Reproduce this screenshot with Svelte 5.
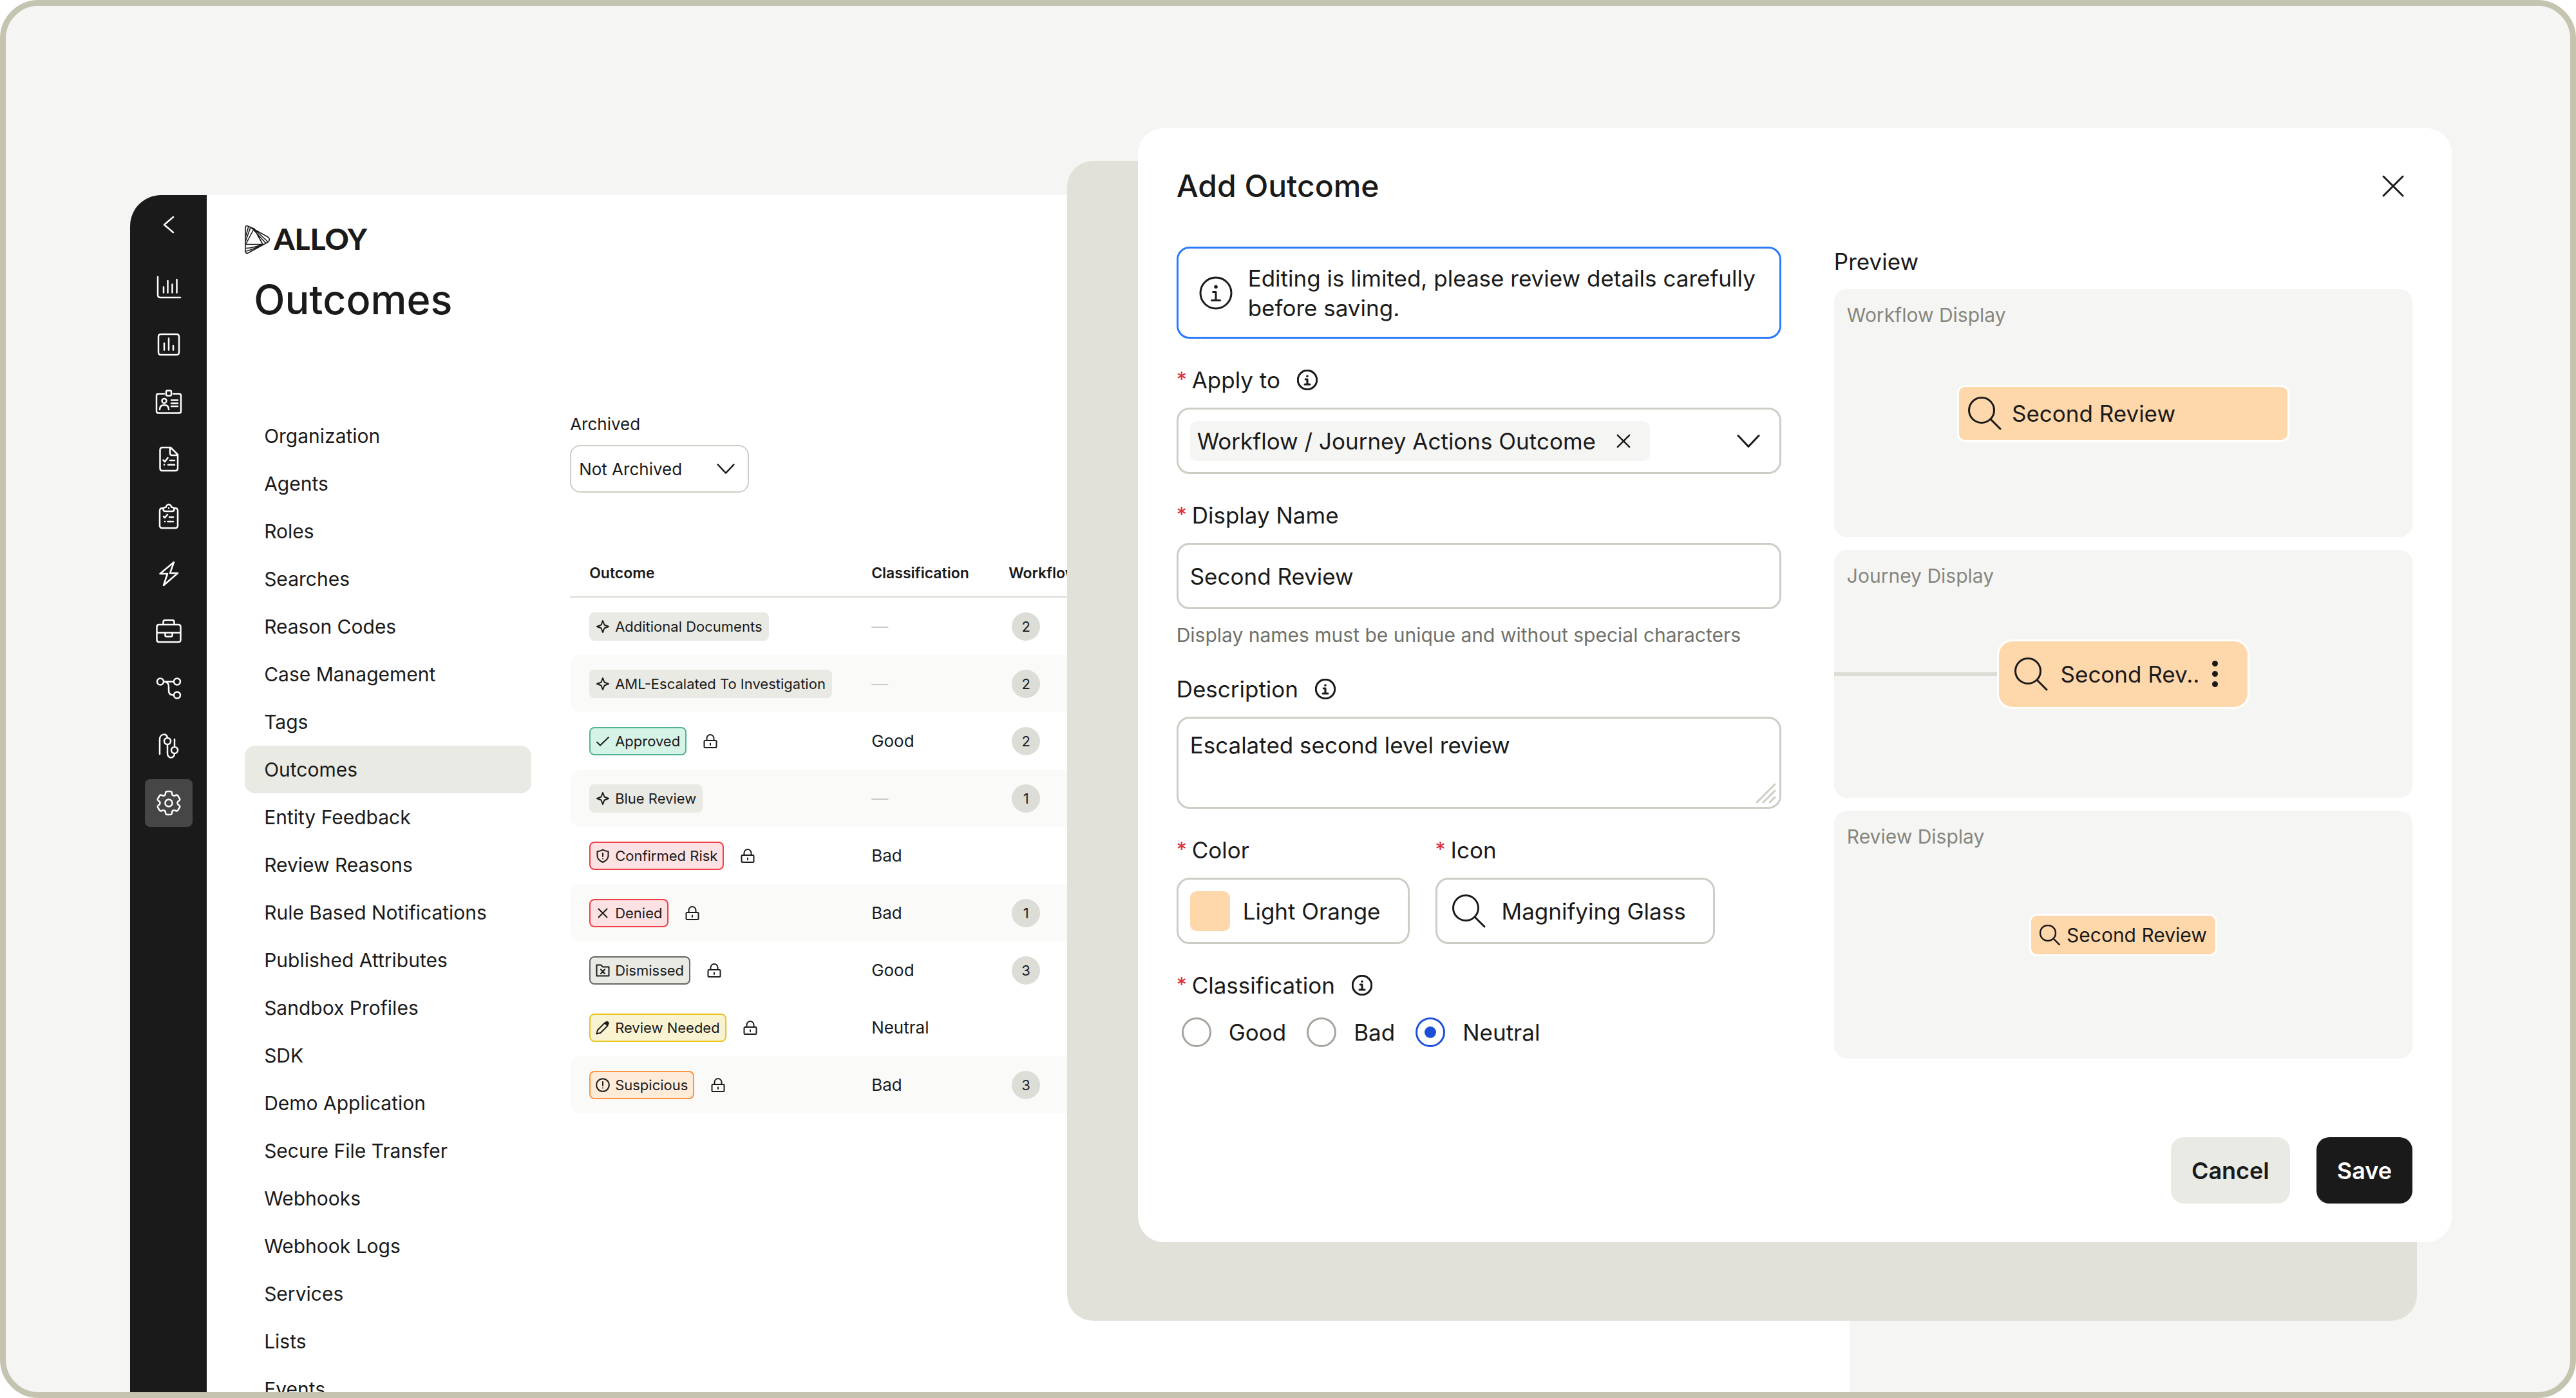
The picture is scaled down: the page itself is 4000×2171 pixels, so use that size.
<script lang="ts">
  const ring = (cx: number, cy: number, r: number) =>
    `M${cx - r} ${cy}a${r} ${r} 0 1 0 ${2 * r} 0a${r} ${r} 0 1 0 ${-2 * r} 0`;

  type Icon = { box: number; line: string; solid?: string };

  const icons: Record<string, Icon> = {
    back: { box: 48, line: 'M31 12L17 24l14 12' },
    chart: { box: 48, line: 'M7 8v28q0 4 4 4h31M16 32.5v-9M22.5 32.5V14M29.5 32.5v-13M36.5 32.5V12' },
    report: {
      box: 48,
      line: 'M12 8h24q4 0 4 4v24q0 4-4 4H12q-4 0-4-4V12q0-4 4-4ZM17 32.5V22M24 32.5V14.5M31 32.5V26'
    },
    badge: {
      box: 48,
      line:
        'M17 11.5H8q-3 0-3 3v24q0 3 3 3h32q3 0 3-3v-24q0-3-3-3h-9M22 6.5h4q2 0 2 2v4q0 2-2 2h-4q-2 0-2-2v-4q0-2 2-2Z' +
        'M10 36q0-7 7-7t7 7M28 21.5h10M28 26.3h10M28 31h10' +
        ring(17, 22.5, 3.5)
    },
    document: {
      box: 48,
      line:
        'M14 6h13l11 11v21q0 4-4 4H14q-3.5 0-3.5-4V10q0-4 3.5-4ZM26 6v9q0 3 3 3h9' +
        'M15.5 25.5l2.5 2.5 4.5-6M26 26h7M17 32.7h.1M23 32.7h10'
    },
    clipboard: {
      box: 48,
      line:
        'M15 11q-5 0-5 4v23q0 4 4 4h20q4 0 4-4V15q0-4-5-4M19 16h10q3.5 0 3.5-3T28 9.5a4 4 0 0 0-8 0q-4.5.5-4.5 3.5T19 16ZM24 11h.1' +
        'M16 24l2 2 4-5M25 25h6M18 32h.1M22.5 32H31'
    },
    bolt: { box: 48, line: 'M32 6L26 23h12L16 42l6-18H10.5Z' },
    briefcase: {
      box: 48,
      line:
        'M9 14h30q3.5 0 3.5 3.5v20q0 3.5-3.5 3.5H9q-3.5 0-3.5-3.5v-20Q5.5 14 9 14ZM15.5 14v-4q0-3 3-3h11q3 0 3 3v4' +
        'M5.5 26.5h37M18.5 26.5v4q0 2 2 2h7q2 0 2-2v-4'
    },
    flow: {
      box: 48,
      line: 'M16 13.5h16M16 13.5q8 0 8 8v6q0 7 8 7' + ring(11, 13.5, 5) + ring(37, 13.5, 5) + ring(37, 34.5, 5)
    },
    route: {
      box: 48,
      line: 'M10 37V14c0-9 12-10 12-2M22 22v14c0 8.5 11 8.5 11 0M33 26V14' + ring(22, 17, 5) + ring(33, 31, 5)
    },
    cog: {
      box: 24,
      line:
        'M9.594 3.94c.09-.542.56-.94 1.11-.94h2.593c.55 0 1.02.398 1.11.94l.213 1.281c.063.374.313.686.645.87.074.04.147.083.22.127.325.196.72.257 1.075.124l1.217-.456a1.125 1.125 0 0 1 1.37.49l1.296 2.247a1.125 1.125 0 0 1-.26 1.431l-1.003.827c-.293.241-.438.613-.43.992a7.723 7.723 0 0 1 0 .255c-.008.378.137.75.43.991l1.004.827c.424.35.534.955.26 1.43l-1.298 2.247a1.125 1.125 0 0 1-1.369.491l-1.217-.456c-.355-.133-.75-.072-1.076.124a6.47 6.47 0 0 1-.22.128c-.331.183-.581.495-.644.869l-.213 1.281c-.09.543-.56.94-1.11.94h-2.594c-.55 0-1.019-.398-1.11-.94l-.213-1.281c-.062-.374-.312-.686-.644-.87a6.52 6.52 0 0 1-.22-.127c-.325-.196-.72-.257-1.076-.124l-1.217.456a1.125 1.125 0 0 1-1.369-.49l-1.297-2.247a1.125 1.125 0 0 1 .26-1.431l1.004-.827c.292-.24.437-.613.43-.991a6.932 6.932 0 0 1 0-.255c.007-.38-.138-.751-.43-.992l-1.004-.827a1.125 1.125 0 0 1-.26-1.43l1.297-2.247a1.125 1.125 0 0 1 1.37-.491l1.216.456c.356.133.751.072 1.076-.124.072-.044.146-.086.22-.128.332-.183.582-.495.644-.869l.214-1.28Z' +
        ring(12, 12, 2.8)
    },
    sparkle: { box: 22, line: 'M11 2l2.5 6.5L20 11l-6.5 2.5L11 20l-2.5-6.5L2 11l6.5-2.5Z' },
    check: { box: 22, line: 'M2 12.5l5 5L20 5' },
    shield: { box: 22, line: 'M11 1.5c3 2 5 2.5 8.500 2.8V11c0 5-4 8-8.500 10-4.500-2-8.500-5-8.500-10V4.300C6 4 8 3.500 11 1.500ZM11 7v5M11 15.500v.1' },
    cross: { box: 22, line: 'M4.5 4.5l13 13M17.5 4.5l-13 13' },
    folder: { box: 22, line: 'M1.5 2.5H8L11 5.5h9.5v14h-19ZM8 9.5l6 6.5M14 9.5L8 16' },
    pencil: {
      box: 22,
      line: 'M1.5 20.5l1.5-6L14 3.5l4.5 4.5L7.5 19Z',
      solid: 'M14 3.5l1.5-1.5c1-1 3-1 4 0s1 3 0 4L18.5 8Z'
    },
    alert: { box: 22, line: ring(11, 11, 9.8) + 'M11 6v6M11 15.5v.1' },
    lock: {
      box: 22,
      line: 'M3 10h16q1.5 0 1.5 1.5v8q0 1.5-1.5 1.5H3q-1.5 0-1.5-1.5v-8Q1.5 10 3 10ZM5.5 10V6.5a5.5 5.5 0 0 1 11 0V10M11 14.5v2.5'
    },
    search: { box: 52, line: ring(21, 21, 19.5) + 'M35 35l15 15' },
    info: { box: 52, line: ring(26, 26, 24) + 'M21.5 24.5H26V37.5M19.5 37.5h13', solid: ring(26, 16.5, 2.4) },
    down: { box: 36, line: 'M2 9.5l16 17 16-17' },
    close: { box: 36, line: 'M3 3l30 30M33 3L3 33' },
    grip: { box: 32, line: 'M2 30L30 2M12 30L30 12M22 30l8-8' }
  };

  const tools = [
    { label: 'Dashboard', icon: 'chart' },
    { label: 'Reports', icon: 'report' },
    { label: 'Entities', icon: 'badge' },
    { label: 'Evaluations', icon: 'document' },
    { label: 'Reviews', icon: 'clipboard' },
    { label: 'Actions', icon: 'bolt' },
    { label: 'Cases', icon: 'briefcase' },
    { label: 'Workflows', icon: 'flow' },
    { label: 'Journeys', icon: 'route' },
    { label: 'Settings', icon: 'cog' }
  ];

  const sections = [
    'Organization',
    'Agents',
    'Roles',
    'Searches',
    'Reason Codes',
    'Case Management',
    'Tags',
    'Outcomes',
    'Entity Feedback',
    'Review Reasons',
    'Rule Based Notifications',
    'Published Attributes',
    'Sandbox Profiles',
    'SDK',
    'Demo Application',
    'Secure File Transfer',
    'Webhooks',
    'Webhook Logs',
    'Services',
    'Lists',
    'Events'
  ];

  const outcomes = [
    { name: 'Additional Documents', icon: 'sparkle', tone: 'plain', count: 2 },
    { name: 'AML-Escalated To Investigation', icon: 'sparkle', tone: 'plain', count: 2, shaded: true },
    { name: 'Approved', icon: 'check', tone: 'green', locked: true, kind: 'Good', count: 2 },
    { name: 'Blue Review', icon: 'sparkle', tone: 'plain', count: 1, shaded: true },
    { name: 'Confirmed Risk', icon: 'shield', tone: 'red', locked: true, kind: 'Bad' },
    { name: 'Denied', icon: 'cross', tone: 'red', locked: true, kind: 'Bad', count: 1, shaded: true },
    { name: 'Dismissed', icon: 'folder', tone: 'gray', locked: true, kind: 'Good', count: 3 },
    { name: 'Review Needed', icon: 'pencil', tone: 'yellow', locked: true, kind: 'Neutral' },
    { name: 'Suspicious', icon: 'alert', tone: 'orange', locked: true, kind: 'Bad', count: 3, shaded: true }
  ];

  let archived = $state('Not Archived');
  let displayName = $state('Second Review');
  let description = $state('Escalated second level review');
  let classification = $state('Neutral');

  let shortName = $derived(displayName.length > 10 ? displayName.slice(0, 10) + '..' : displayName);
</script>

{#snippet icon(name: string, size: string)}
  <svg class="icon {size}" viewBox="0 0 {icons[name].box} {icons[name].box}" aria-hidden="true">
    <path d={icons[name].line} />
    {#if icons[name].solid}
      <path class="solid" d={icons[name].solid} />
    {/if}
  </svg>
{/snippet}

<div class="frame">
  <div class="window">
    <aside class="toolbar">
      <button class="collapse" aria-label="Collapse">{@render icon('back', 'tool-icon')}</button>
      {#each tools as tool}
        <a class="tool" class:active={tool.icon === 'cog'} href="#{tool.icon}" aria-label={tool.label}>
          {@render icon(tool.icon, tool.icon === 'cog' ? 'cog-icon' : 'tool-icon')}
        </a>
      {/each}
    </aside>

    <main>
      <header class="brand">
        <svg class="mark" viewBox="0 0 40 46" aria-hidden="true">
          <path d="M1 5.5Q1 0 6 2.500L36 19q5 3.500 0 8L6 43.500Q1 46 1 40.500Z" />
          <path d="M1.500 30.500L14.500 6L28 30.500ZM1.500 25L9 4M1.500 18L6 2.500M9 4l5.500 2M11 5L33 29M16 8L36 26.500M1.500 36.500Q14 36 28 30.500M2 41Q12 39 28 30.500" />
        </svg>
        <span>ALLOY</span>
      </header>
      <h1>Outcomes</h1>

      <div class="settings">
        <nav aria-label="Settings">
          {#each sections as section}
            <a class:active={section === 'Outcomes'} href="#{section}">{section}</a>
          {/each}
        </nav>

        <section class="list">
          <label for="archived">Archived</label>
          <div class="filter">
            <select id="archived" bind:value={archived}>
              <option>Not Archived</option>
              <option>Archived</option>
            </select>
            {@render icon('down', 'filter-icon')}
          </div>

          <table>
            <thead>
              <tr>
                <th class="col-outcome">Outcome</th>
                <th class="col-kind">Classification</th>
                <th>Workflows</th>
              </tr>
            </thead>
            <tbody>
              {#each outcomes as outcome}
                <tr class:shaded={outcome.shaded}>
                  <td>
                    <div class="outcome">
                      <span class="pill {outcome.tone}">
                        {@render icon(outcome.icon, 'pill-icon')}
                        {outcome.name}
                      </span>
                      {#if outcome.locked}
                        {@render icon('lock', 'pill-icon')}
                      {/if}
                    </div>
                  </td>
                  <td>
                    {#if outcome.kind}
                      {outcome.kind}
                    {:else}
                      <span class="none">—</span>
                    {/if}
                  </td>
                  <td>
                    {#if outcome.count}
                      <span class="count">{outcome.count}</span>
                    {/if}
                  </td>
                </tr>
              {/each}
            </tbody>
          </table>
        </section>
      </div>
    </main>
  </div>

  <div class="dialog" role="dialog" aria-labelledby="dialog-title">
    <header class="dialog-head">
      <h2 id="dialog-title">Add Outcome</h2>
      <button class="close" aria-label="Close">{@render icon('close', 'close-icon')}</button>
    </header>

    <div class="columns">
      <form class="fields">
        <div class="notice">
          {@render icon('info', 'big-icon')}
          <p>Editing is limited, please review details carefully before saving.</p>
        </div>

        <div class="field">
          <label for="apply-to"><b>*</b>Apply to {@render icon('info', 'info-icon')}</label>
          <div class="control picker">
            <span class="choice">
              Workflow / Journey Actions Outcome
              <button type="button" aria-label="Remove">{@render icon('close', 'remove-icon')}</button>
            </span>
            <button type="button" id="apply-to" aria-label="Apply to">{@render icon('down', 'down-icon')}</button>
          </div>
        </div>

        <div class="field">
          <label for="display-name"><b>*</b>Display Name</label>
          <input class="control" id="display-name" type="text" bind:value={displayName} />
          <p class="hint">Display names must be unique and without special characters</p>
        </div>

        <div class="field">
          <label for="description">Description {@render icon('info', 'info-icon')}</label>
          <div class="area">
            <textarea class="control" id="description" bind:value={description}></textarea>
            {@render icon('grip', 'grip-icon')}
          </div>
        </div>

        <div class="pair">
          <div class="field">
            <label for="color"><b>*</b>Color</label>
            <button class="control option" type="button" id="color">
              <span class="swatch"></span>
              Light Orange
            </button>
          </div>
          <div class="field">
            <label for="icon"><b>*</b>Icon</label>
            <button class="control option" type="button" id="icon">
              <span class="glyph">{@render icon('search', 'big-icon')}</span>
              Magnifying Glass
            </button>
          </div>
        </div>

        <fieldset>
          <legend><b>*</b>Classification {@render icon('info', 'info-icon')}</legend>
          <div class="radios">
            {#each ['Good', 'Bad', 'Neutral'] as kind}
              <label>
                <input type="radio" name="classification" value={kind} bind:group={classification} />
                {kind}
              </label>
            {/each}
          </div>
        </fieldset>
      </form>

      <section class="preview">
        <h3>Preview</h3>
        <figure>
          <figcaption>Workflow Display</figcaption>
          <div class="node workflow">
            {@render icon('search', 'big-icon')}
            {displayName}
          </div>
        </figure>
        <figure>
          <figcaption>Journey Display</figcaption>
          <div class="wire"></div>
          <div class="node journey">
            {@render icon('search', 'big-icon')}
            {shortName}
            <span class="dots"><i></i><i></i><i></i></span>
          </div>
        </figure>
        <figure>
          <figcaption>Review Display</figcaption>
          <div class="node review">
            {@render icon('search', 'small-icon')}
            {displayName}
          </div>
        </figure>
      </section>
    </div>

    <footer>
      <button class="action">Cancel</button>
      <button class="action primary">Save</button>
    </footer>
  </div>
</div>

<style>
  :global(body) {
    background: #fff;
  }

  .frame,
  .frame * {
    box-sizing: border-box;
  }

  .frame {
    display: grid;
    grid-template: minmax(0, 1fr) / minmax(0, 1fr);
    height: 100vh;
    border: 9px solid #c5c4b0;
    border-radius: 60px;
    background: #f5f5f3;
    color: #1a1a1a;
    font-family: Inter, 'Liberation Sans', sans-serif;
    overflow: hidden;
  }

  h1,
  h2,
  h3,
  p,
  figure,
  fieldset {
    margin: 0;
    padding: 0;
    border: 0;
    font-weight: 400;
  }

  button,
  input,
  select,
  textarea {
    margin: 0;
    padding: 0;
    border: 0;
    background: none;
    color: inherit;
    font: inherit;
  }

  a {
    color: inherit;
    text-decoration: none;
  }

  .icon {
    display: block;
    flex: none;
    fill: none;
    stroke: currentColor;
    stroke-width: 3;
    stroke-linecap: round;
    stroke-linejoin: round;
  }

  .solid {
    fill: currentColor;
    stroke-width: 1;
  }

  .window {
    grid-area: 1 / 1;
    display: flex;
    margin: 294px 28.1% 0 4.85%;
    border-radius: 48px 0 0 0;
    background: #fff;
    overflow: hidden;
  }

  /* dark tool strip */
  .toolbar {
    display: flex;
    flex: none;
    flex-direction: column;
    align-items: center;
    gap: 15px;
    width: 119px;
    padding-top: 22px;
    background: #1a1a1a;
    color: #fff;
  }

  .collapse {
    margin-bottom: 21px;
  }

  .tool {
    display: grid;
    place-items: center;
    width: 74px;
    height: 74px;
    border-radius: 8px;
  }

  .tool.active {
    background: #464646;
  }

  .tool-icon,
  .cog-icon {
    width: 48px;
    height: 48px;
    stroke-width: 2.5;
  }

  .cog-icon {
    stroke-width: 1.25;
  }

  main {
    flex: 1;
    min-width: 0;
    padding: 46px 60px 0 59px;
  }

  .brand {
    display: flex;
    align-items: center;
    gap: 5px;
    height: 46px;
    font-family: Lato, sans-serif;
    font-size: 46px;
    font-weight: 900;
    line-height: 44px;
  }

  .brand span {
    padding-bottom: 3px;
  }

  .mark {
    width: 40px;
    height: 46px;
    fill: none;
    stroke: currentColor;
    stroke-width: 1.6;
    stroke-linejoin: round;
  }

  h1 {
    margin: 30px 0 135px 14px;
    font-size: 63px;
    font-weight: 500;
    line-height: 80px;
  }

  .settings {
    display: flex;
    gap: 60px;
  }

  nav {
    flex: none;
    width: 445px;
  }

  nav a {
    display: block;
    padding-left: 30px;
    border-radius: 16px;
    font-size: 30px;
    line-height: 74px;
  }

  nav a.active {
    background: #e9eae4;
  }

  .list {
    flex: 1;
    font-size: 26px;
  }

  .list label {
    display: block;
    margin-bottom: 13px;
    line-height: 38px;
  }

  .filter {
    position: relative;
    width: 278px;
    margin-bottom: 88px;
  }

  select {
    width: 100%;
    height: 74px;
    padding: 0 12px;
    border: 2px solid #cccdc4;
    border-radius: 16px;
    appearance: none;
  }

  .filter-icon {
    position: absolute;
    top: 23px;
    right: 22px;
    width: 28px;
    height: 28px;
    pointer-events: none;
  }

  table {
    width: 100%;
    border-spacing: 0;
    table-layout: fixed;
  }

  .col-outcome {
    width: 438px;
  }

  .col-kind {
    width: 213px;
  }

  th {
    height: 75px;
    padding: 0 0 0 30px;
    border-bottom: 2px solid #dcdcd2;
    font-size: 23px;
    font-weight: 600;
    text-align: left;
  }

  td {
    height: 89px;
    padding: 0 0 0 30px;
  }

  .shaded td {
    background: #fafaf8;
  }

  .shaded td:first-child {
    border-radius: 16px 0 0 16px;
  }

  .outcome {
    display: flex;
    align-items: center;
    gap: 26px;
  }

  .pill {
    display: flex;
    align-items: center;
    gap: 8px;
    height: 44px;
    padding: 0 8px;
    border: 2px solid #e9eae4;
    border-radius: 8px;
    background: #e9eae4;
    font-size: 22px;
    white-space: nowrap;
  }

  .pill.green {
    border-color: #52b38f;
    background: #d6f3e7;
  }

  .pill.red {
    border-color: #ee3f46;
    background: #fde1e3;
  }

  .pill.gray {
    border-color: #66675f;
  }

  .pill.yellow {
    border-color: #e8c51f;
    background: #faf3d1;
  }

  .pill.orange {
    border-color: #fb9543;
    background: #feecd8;
  }

  .pill-icon {
    width: 22px;
    height: 22px;
    stroke-width: 2;
  }

  .none {
    color: #cccdc4;
  }

  .count {
    display: grid;
    place-items: center;
    width: 44px;
    height: 44px;
    margin-left: 5px;
    border-radius: 50%;
    background: #dcddd7;
    font-size: 22px;
  }

  /* add outcome dialog over its offset backing card */
  .dialog {
    position: relative;
    z-index: 1;
    grid-area: 1 / 1;
    align-self: start;
    margin: 190px 4.62% 0 44.14%;
    padding: 60px 61px 60px 60px;
    border-radius: 40px;
    background: #fff;
    font-size: 35px;
    line-height: 46px;
  }

  .dialog::before {
    position: absolute;
    inset: 51px 54px -122px -110px;
    z-index: -2;
    border-radius: 40px;
    background: #e1e1d9;
    content: '';
  }

  .dialog::after {
    position: absolute;
    inset: 0;
    z-index: -1;
    border-radius: 40px;
    background: #fff;
    content: '';
  }

  .dialog-head {
    display: flex;
    align-items: center;
    justify-content: space-between;
    margin-bottom: 64px;
  }

  h2 {
    font-size: 48px;
    font-weight: 500;
  }

  .close {
    display: grid;
    place-items: center;
    width: 60px;
    height: 60px;
  }

  .close-icon {
    width: 36px;
    height: 36px;
  }

  .columns {
    display: grid;
    grid-template-columns: minmax(0, 939fr) minmax(0, 898fr);
    gap: 82px;
  }

  .fields {
    display: flex;
    flex-direction: column;
    gap: 41px;
  }

  .notice {
    display: flex;
    align-items: center;
    gap: 24px;
    min-height: 143px;
    padding: 0 16px 0 32px;
    border: 3px solid #2a7bfb;
    border-radius: 20px;
  }

  .big-icon {
    width: 52px;
    height: 52px;
  }

  .small-icon {
    width: 32px;
    height: 32px;
    stroke-width: 4;
  }

  .info-icon {
    width: 32px;
    height: 32px;
    margin-left: 16px;
    stroke-width: 5;
  }

  .field {
    display: flex;
    flex-direction: column;
    gap: 20px;
  }

  .field > label,
  legend {
    display: flex;
    align-items: center;
    padding: 0;
    white-space: pre;
  }

  b {
    margin-right: 8px;
    color: #dc2f3c;
    font-size: 32px;
    font-weight: 400;
  }

  .control {
    width: 100%;
    height: 103px;
    padding: 0 18px;
    border: 3px solid #cccdc4;
    border-radius: 20px;
    background: #fff;
  }

  .picker {
    display: flex;
    align-items: center;
    justify-content: space-between;
    padding-right: 30px;
  }

  .choice {
    display: flex;
    align-items: center;
    gap: 32px;
    height: 62px;
    padding: 0 30px 0 11px;
    border-radius: 10px;
    background: #f5f5f3;
  }

  .remove-icon {
    width: 22px;
    height: 22px;
    stroke-width: 4;
  }

  .down-icon {
    width: 36px;
    height: 36px;
  }

  .hint {
    color: #70716a;
    font-size: 30px;
    line-height: 40px;
  }

  .area {
    position: relative;
  }

  textarea.control {
    display: block;
    height: 143px;
    padding: 18px;
    resize: none;
  }

  .grip-icon {
    position: absolute;
    right: 8px;
    bottom: 8px;
    width: 32px;
    height: 32px;
    color: #cccdc4;
  }

  .pair {
    display: flex;
    gap: 40px;
  }

  .option {
    display: flex;
    align-items: center;
    gap: 20px;
    padding-right: 42px;
    white-space: nowrap;
  }

  .swatch,
  .glyph {
    display: grid;
    place-items: center;
    width: 62px;
    height: 62px;
    border-radius: 10px;
  }

  .swatch {
    background: #fed7aa;
  }

  .radios {
    display: flex;
    gap: 32px;
    padding: 27px 0 0 8px;
  }

  .radios label {
    display: flex;
    align-items: center;
    gap: 27px;
  }

  input[type='radio'] {
    display: grid;
    place-items: center;
    width: 46px;
    height: 46px;
    border: 3px solid #a3a49b;
    border-radius: 50%;
    appearance: none;
  }

  input[type='radio']:checked {
    border-color: #1d4ed8;
  }

  input[type='radio']:checked::before {
    width: 18px;
    height: 18px;
    border-radius: 50%;
    background: #1d4ed8;
    content: '';
  }

  .preview {
    display: flex;
    flex-direction: column;
    gap: 20px;
  }

  h3 {
    font-size: 35px;
  }

  figure {
    display: grid;
    height: 385px;
    border-radius: 20px;
    background: #f5f5f3;
  }

  figure > * {
    grid-area: 1 / 1;
  }

  figcaption {
    padding: 20px;
    color: #85867d;
    font-size: 30px;
    line-height: 40px;
  }

  .wire {
    align-self: center;
    width: 50%;
    height: 6px;
    background: #dcddd7;
  }

  .node {
    display: flex;
    align-items: center;
    place-self: center;
    gap: 16px;
    border: 3px solid #fff;
    border-radius: 12px;
    background: #fed7aa;
    white-space: nowrap;
  }

  .workflow {
    width: 516px;
    height: 88px;
    padding: 0 14px;
  }

  .journey {
    gap: 20px;
    height: 108px;
    padding: 0 46px 0 24px;
    border-radius: 24px;
  }

  .review {
    gap: 10px;
    height: 66px;
    padding: 0 13px;
    font-size: 30px;
  }

  .dots {
    display: grid;
    gap: 7px;
  }

  .dots i {
    width: 9px;
    height: 9px;
    border-radius: 50%;
    background: currentColor;
  }

  footer {
    display: flex;
    justify-content: flex-end;
    gap: 41px;
    margin-top: 122px;
  }

  .action {
    height: 103px;
    padding: 0 32px;
    border-radius: 20px;
    background: #e9eae4;
    font-size: 36px;
    font-weight: 600;
  }

  .action.primary {
    background: #1a1a1a;
    color: #fff;
  }
</style>
